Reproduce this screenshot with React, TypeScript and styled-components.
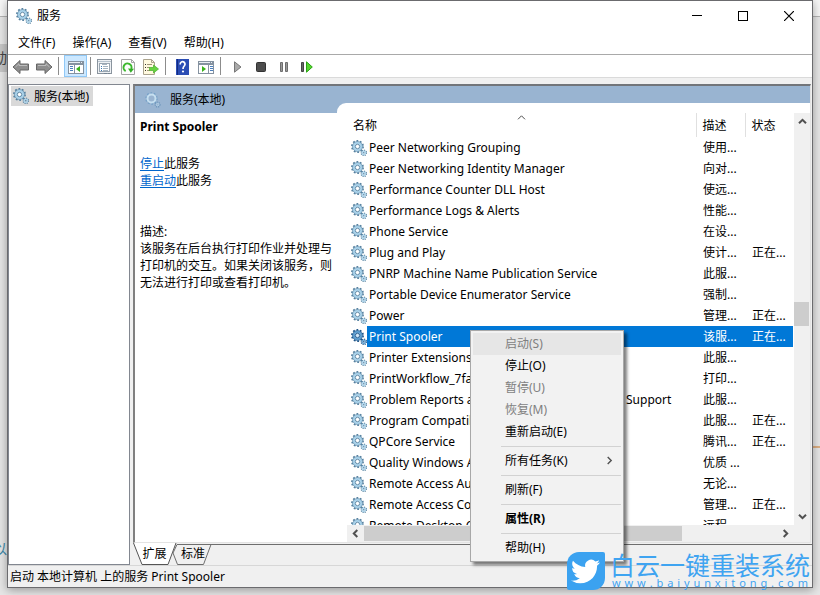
import React from "react";
import styled, { createGlobalStyle, css } from "styled-components";

const GlobalStyle = createGlobalStyle`
  *, *::before, *::after { box-sizing: border-box; }
  body {
    margin: 0;
    background: #e6e6e6;
    color: #000;
    font: 12px/17px "Noto Sans", "Noto Sans CJK SC", sans-serif;
  }
  button { margin: 0; padding: 0; border: 0; background: none; color: inherit; font: inherit; }
`;

const Desktop = styled.div`
  position: relative;
  display: flex;
  height: 100vh;
  padding: 0 7px 7px;
  overflow: hidden;
  background: linear-gradient(#f6f6f6 0 16px, #b4b4b4 16px 17px, #e6e6e6 17px);
`;

const BehindText = styled.span<{ $top: number; $tone: string; $fill: string }>`
  position: absolute;
  left: 0;
  top: ${(p) => p.$top}px;
  width: 7px;
  height: 28px;
  overflow: hidden;
  direction: rtl;
  white-space: nowrap;
  line-height: 28px;
  font-size: 14px;
  color: ${(p) => p.$tone};
  background: ${(p) => p.$fill};
`;

const BehindRule = styled.span`
  position: absolute;
  right: 0;
  top: 446px;
  width: 7px;
  height: 2px;
  background: #dcae82;
`;

const Window = styled.main`
  position: relative;
  display: flex;
  flex: 1;
  min-width: 0;
  flex-direction: column;
  border: 1px solid #6b6b6e;
  background: #f0f0f0;
  box-shadow: 0 2px 9px rgba(0, 0, 0, 0.35);
`;

const TitleBar = styled.header`
  display: flex;
  flex: none;
  align-items: center;
  height: 29px;
  padding-left: 8px;
  background: #fff;
`;

const Title = styled.h1`
  flex: 1;
  margin: 0 0 0 5px;
  font-size: 12px;
  font-weight: 400;
`;

const CaptionButton = styled.button`
  display: grid;
  place-items: center;
  width: 46px;
  height: 29px;
`;

const MenuBar = styled.nav`
  display: flex;
  flex: none;
  align-items: center;
  gap: 17px;
  height: 25px;
  padding-left: 10px;
  border-bottom: 1px solid #a9a9a9;
  background: #fff;
`;

const Toolbar = styled.div`
  display: flex;
  flex: none;
  align-items: center;
  height: 23px;
  padding-left: 1px;
  border-bottom: 1px solid #dadada;
  background: #fff;
`;

const ToolButton = styled.button<{ $pressed?: boolean }>`
  display: grid;
  place-items: center;
  width: 23px;
  height: 22px;
  padding-top: 2px;
  ${(p) => p.$pressed && css`
    border: 1px solid #90c8f6;
    background: #cce8ff;
  `}
`;

const ToolDivider = styled.span<{ $tight?: boolean }>`
  width: 1px;
  height: 18px;
  margin: 0 ${(p) => (p.$tight ? 2 : 5)}px 0 3px;
  background: #8c8c8c;
`;

const Body = styled.div`
  display: flex;
  flex: 1;
  gap: 3px;
  min-height: 0;
  padding-top: 6px;
`;

const TreePane = styled.aside`
  flex: none;
  width: 122px;
  padding: 1px 2px;
  border: 1px solid #828790;
  background: #fff;
`;

const TreeItem = styled.button`
  display: flex;
  align-items: center;
  gap: 5px;
  height: 20px;
  padding: 0 4px 0 2px;
  background: #d9d9d9;
`;

const Workspace = styled.section`
  display: flex;
  flex: 1;
  min-width: 0;
  flex-direction: column;
`;

const Pane = styled.div`
  display: flex;
  flex: 1;
  min-height: 0;
  margin-right: 1px;
  border: solid;
  border-width: 2px 1px 1px 2px;
  border-color: #72757a #e3e3e3 #e3e3e3 #808080;
  background: #99b4d1;
`;

const Details = styled.div`
  display: flex;
  flex: none;
  flex-direction: column;
  width: 202px;
`;

const PaneTitle = styled.h2`
  display: flex;
  flex: none;
  align-items: center;
  gap: 9px;
  height: 27px;
  margin: 0;
  padding-left: 10px;
  font-size: 12px;
  font-weight: 400;
`;

const DetailText = styled.div`
  flex: 1;
  padding: 5px 4px 0 5px;
  background: #fff;
`;

const ServiceName = styled.h3`
  margin: 0 0 20px;
  font-size: 12px;
  font-weight: 700;
`;

const Paragraph = styled.p`
  margin: 0;
`;

const Actions = styled.div`
  margin-bottom: 34px;
`;

const ActionLink = styled.a`
  color: #0066cc;
  text-underline-offset: 2px;
`;

const ListPanel = styled.div`
  display: grid;
  flex: 1;
  grid-template-columns: minmax(0, 1fr) 16px;
  grid-template-rows: minmax(0, 1fr) 17px;
  min-width: 0;
  margin-top: 17px;
  padding: 10px 0 0 10px;
  border-top-left-radius: 9px;
  background: #fff;
`;

const TableView = styled.div`
  min-width: 0;
  margin-right: 1px;
  overflow: hidden;
`;

const Table = styled.table`
  width: 100%;
  table-layout: fixed;
  border-collapse: collapse;
`;

const HeadCell = styled.th<{ $width?: number }>`
  position: relative;
  width: ${(p) => (p.$width ? `${p.$width}px` : "auto")};
  height: 24px;
  padding: 0 0 0 6px;
  border-left: ${(p) => (p.$width ? "1px solid #e0e0e0" : "0")};
  font-weight: 400;
  text-align: left;
`;

const SortMark = styled.span`
  position: absolute;
  top: 0;
  left: 50%;
  display: flex;
  margin-left: -4px;
`;

const Row = styled.tr<{ $selected?: boolean }>`
  height: 21px;
  ${(p) => p.$selected && css`
    color: #fff;
    td + td, span { background: #0078d7; }
  `}
`;

const Cell = styled.td`
  height: 21px;
  padding: 0 0 0 7px;
  white-space: nowrap;
`;

const NameCell = styled.td`
  padding: 0 0 0 4px;
  white-space: nowrap;
`;

const NameBox = styled.div`
  display: flex;
  align-items: center;
  height: 21px;
`;

const NameLabel = styled.span`
  flex: 1;
  padding-left: 2px;
  line-height: 21px;
`;

const VScroll = styled.div`
  display: flex;
  flex-direction: column;
  align-items: center;
  justify-content: space-between;
  background: #f0f0f0;
`;

const HScroll = styled.div`
  display: flex;
  align-items: center;
  justify-content: space-between;
  background: #f0f0f0;
`;

const ScrollButton = styled.button`
  display: grid;
  flex: none;
  place-items: center;
  width: 17px;
  height: 17px;
`;

const VTrack = styled.div`
  flex: 1;
  width: 100%;
  padding-right: 1px;
  display: flex;
  flex-direction: column;
`;

const HTrack = styled.div`
  display: flex;
  flex: 1;
  height: 15px;
`;

const Thumb = styled.div`
  flex: none;
  background: #cdcdcd;
`;

const VThumb = styled(Thumb)`
  height: 24px;
`;

const HThumb = styled(Thumb)`
  width: 77%;
`;

const TrackSpace = styled.div<{ $grow: number }>`
  flex: ${(p) => p.$grow};
`;

const Corner = styled.div`
  background: #f0f0f0;
`;

const Tabs = styled.div`
  display: flex;
  flex: none;
  height: 22px;
`;

const TabRule = styled.div`
  flex: 1;
  margin-top: 1px;
  border-top: 1px solid #6e6e6e;
`;

const Tab = styled.button`
  position: relative;
  width: 34px;
  height: 22px;
`;

const FirstTab = styled(Tab)`
  width: 43px;
`;

const TabShape = styled.svg`
  position: absolute;
  top: 0;
  left: 0;
  overflow: visible;
`;

const TabLabel = styled.span`
  position: relative;
  line-height: 22px;
`;

const StatusBar = styled.footer`
  flex: none;
  height: 22px;
  padding-left: 2px;
  border-top: 1px solid #d7d7d7;
  line-height: 22px;
`;

const ContextMenu = styled.div`
  position: absolute;
  left: 462px;
  top: 329px;
  width: 154px;
  padding: 2px;
  border: 1px solid #a8a8a8;
  background: #f2f2f2;
  box-shadow: 3px 3px 3px rgba(0, 0, 0, 0.5);
`;

const MenuEntry = styled.button<{ $disabled?: boolean; $active?: boolean; $bold?: boolean }>`
  display: flex;
  align-items: center;
  justify-content: space-between;
  width: 100%;
  height: 22px;
  padding: 0 7px 2px 32px;
  color: ${(p) => (p.$disabled ? "#7f7f7f" : "#000")};
  background: ${(p) => (p.$active ? "#e6e6e6" : "transparent")};
  font-weight: ${(p) => (p.$bold ? 700 : 400)};
`;

const MenuRule = styled.hr`
  height: 1px;
  margin: 3px 0 3px 28px;
  border: 0;
  background: #d2d2d2;
`;

const Brand = styled.div`
  position: absolute;
  right: 10px;
  bottom: 5px;
  display: flex;
  gap: 5px;
  color: #3fa4f1;
`;

const BrandBadge = styled.div`
  display: grid;
  place-items: center;
  width: 38px;
  height: 38px;
  border-radius: 12px 2px 12px 2px;
  background: #3ba2f0;
`;

const BrandText = styled.div`
  display: flex;
  flex-direction: column;
`;

const BrandName = styled.strong`
  font: 400 25px/24px "Noto Sans CJK SC", sans-serif;
  white-space: nowrap;
`;

const BrandUrl = styled.span`
  display: flex;
  justify-content: space-between;
  padding: 0 2px;
  font: 11px/14px "Noto Sans", sans-serif;
`;

function Gear({ selected = false }: { selected?: boolean }) {
  const edge = selected ? "#1d5488" : "#55809f";
  const fill = selected ? "#5f9fd0" : "#a9d2ea";
  return (
    <svg width="16" height="16" viewBox="0 0 16 16" fill="none" aria-hidden="true">
      <circle cx="6.5" cy="6.5" r="5.6" stroke={edge} strokeWidth="1.7" strokeDasharray="1.8 1.72" />
      <circle cx="6.5" cy="6.5" r="3.7" stroke={fill} strokeWidth="2.6" />
      <circle cx="6.5" cy="6.5" r="5" stroke={edge} strokeWidth=".6" />
      <circle cx="6.5" cy="6.5" r="2.2" fill={selected ? "#d3e8f7" : "#fff"} stroke={edge} strokeWidth=".9" />
      <circle cx="12.8" cy="12.8" r="2.6" stroke={edge} strokeWidth="1.3" strokeDasharray="1.1 .94" />
      <circle cx="12.8" cy="12.8" r="1.7" stroke={fill} strokeWidth="1.3" />
      <circle cx="12.8" cy="12.8" r=".8" fill={edge} />
    </svg>
  );
}

function PaleGear() {
  return (
    <svg width="16" height="16" viewBox="0 0 16 16" fill="none" aria-hidden="true">
      <circle cx="6.5" cy="6.5" r="5.4" stroke="#739fc6" strokeWidth="1.6" strokeDasharray="1.7 1.69" />
      <circle cx="6.5" cy="6.5" r="4" stroke="#c5dff0" strokeWidth="2" />
      <circle cx="12.6" cy="12.6" r="2.3" stroke="#6f97bd" strokeWidth="1.5" strokeDasharray="1.1 .7" />
      <circle cx="12.6" cy="12.6" r="1.3" stroke="#b3d0e5" />
    </svg>
  );
}

type Direction = "up" | "down" | "left" | "right";
const turns: Record<Direction, number> = { up: 0, right: 90, down: 180, left: 270 };

function Chevron({ to, width = 2 }: { to: Direction; width?: number }) {
  return (
    <svg width="9" height="9" viewBox="0 0 9 9" fill="none" aria-hidden="true">
      <path d="M1 6.3 4.5 2.8 8 6.3" stroke="#505050" strokeWidth={width} transform={`rotate(${turns[to]} 4.5 4.5)`} />
    </svg>
  );
}

function Arrow({ flip = false }: { flip?: boolean }) {
  return (
    <svg width="18" height="16" viewBox="0 0 18 16" aria-hidden="true">
      <path d="M1 8 8 1.5V5h8.5v6H8v3.5Z" fill="#8e8e8e" stroke="#666" transform={flip ? "rotate(180 9 8)" : undefined} />
      <path d="M3.5 8 7 4.7V6.5h8" fill="none" stroke="#bdbdbd" transform={flip ? "matrix(-1 0 0 1 18 0)" : undefined} />
    </svg>
  );
}

function PanelIcon({ side }: { side: "left" | "right" }) {
  const list = side === "left" ? 2 : 12;
  return (
    <svg width="16" height="13" viewBox="0 0 16 13" shapeRendering="crispEdges" aria-hidden="true">
      <path d="M0 0h16v13H0z" fill="#8592a0" />
      <path d="M1 1h11v1H1zM13 1h1v1h-1z" fill="#e9eef3" />
      <path d="M1 4h14v8H1z" fill="#fff" />
      <path d={side === "left" ? "M6 4h1v8H6z" : "M10 4h1v8h-1z"} fill="#8592a0" />
      <path d={`M${list} 5h3v1h-3zM${list} 7h3v1h-3zM${list} 9h3v1h-3z`} fill="#4c7fbd" />
      <path d={side === "left" ? "M12 5v6L8 8z" : "M4 5v6l4-3z"} fill="#39b31b" shapeRendering="auto" />
    </svg>
  );
}

function PropertiesIcon() {
  return (
    <svg width="15" height="16" viewBox="0 0 15 16" shapeRendering="crispEdges" aria-hidden="true">
      <path d="M.5.5h14v14H.5z" fill="#eef1f4" stroke="#8a949e" />
      <path d="M1 2h13" stroke="#b8c3cd" />
      <path d="M2.5 4.5h10v8h-10z" fill="#fff" stroke="#9aa6b1" />
      <path d="M4 7h1M4 9h1M4 11h1" stroke="#3977b4" />
      <path d="M6 7h5M6 9h5M6 11h5M5 5h5" stroke="#a6b4c0" />
      <path d="M7 14h3M11 14h2" stroke="#748391" />
    </svg>
  );
}

function RefreshIcon() {
  return (
    <svg width="14" height="16" viewBox="0 0 14 16" fill="none" aria-hidden="true">
      <path d="M.5.5h10l3 3v12H.5z" fill="#fdfdfd" stroke="#a5a5a5" />
      <path d="M10.5.5v3h3" stroke="#a5a5a5" />
      <path d="M4.7 12A4 4 0 1 1 10.2 10" stroke="#3db82e" strokeWidth="2" />
      <path d="m7 9.5 6 .2-3.2 4Z" fill="#32ad25" />
    </svg>
  );
}

function ExportIcon() {
  return (
    <svg width="16" height="16" viewBox="0 0 16 16" fill="none" aria-hidden="true">
      <path d="M.5.5h8l3 3v12H.5z" fill="#fff9df" stroke="#aaa38d" />
      <path d="M8.5.5v3h3" stroke="#aaa38d" />
      <path d="M2 5.5h1M2 8.5h1M2 11.5h1" stroke="#333" />
      <path d="M4 5.5h5M4 8.5h3M4 11.5h3" stroke="#9c9374" />
      <path d="M6.5 8.5h4V6l5 4-5 4v-2.5h-4z" fill="#67d440" stroke="#48ad2a" strokeWidth=".7" />
    </svg>
  );
}

function HelpIcon() {
  return (
    <svg width="13" height="16" viewBox="0 0 13 16" fill="none" aria-hidden="true">
      <path d="M0 0h13v16H0z" fill="#2b4db4" />
      <path d="M1.5 0v16" stroke="#142c82" />
      <path d="M4.2 5.5V5A2.4 2.4 0 1 1 8.5 6.6C7.5 7.6 7 8 7 10" stroke="#fff" strokeWidth="1.7" />
      <circle cx="7" cy="12.5" r="1.1" fill="#fff" />
    </svg>
  );
}

function PlayIcon() {
  return (
    <svg width="8" height="12" viewBox="0 0 8 12" aria-hidden="true">
      <path d="M.5.8 7 6 .5 11.2Z" fill="#aaa" stroke="#777" />
    </svg>
  );
}

function StopIcon() {
  return (
    <svg width="10" height="10" viewBox="0 0 10 10" aria-hidden="true">
      <rect x=".5" y=".5" width="9" height="9" rx="1" fill="#4d4d4d" stroke="#333" />
    </svg>
  );
}

function PauseIcon() {
  return (
    <svg width="8" height="10" viewBox="0 0 8 10" aria-hidden="true">
      <path d="M.5.5h2v9h-2zM5.5.5h2v9h-2z" fill="#999" stroke="#6e6e6e" />
    </svg>
  );
}

function RestartIcon() {
  return (
    <svg width="12" height="12" viewBox="0 0 12 12" aria-hidden="true">
      <path d="M.5 1.5h2v9h-2z" fill="#666" stroke="#444" />
      <path d="M5.5.8 11.3 6 5.5 11.2Z" fill="#55d62e" stroke="#2aa414" />
    </svg>
  );
}

function Bird() {
  return (
    <svg width="29" height="29" viewBox="0 0 24 24" fill="#fff" aria-hidden="true">
      <path d="M23.953 4.57a10 10 0 01-2.825.775 4.958 4.958 0 002.163-2.723c-.951.555-2.005.959-3.127 1.184a4.92 4.92 0 00-8.384 4.482C7.69 8.095 4.067 6.13 1.64 3.162a4.822 4.822 0 00-.666 2.475c0 1.71.87 3.213 2.188 4.096a4.904 4.904 0 01-2.228-.616v.06a4.923 4.923 0 003.946 4.827 4.996 4.996 0 01-2.212.085 4.936 4.936 0 004.604 3.417 9.867 9.867 0 01-6.102 2.105c-.39 0-.779-.023-1.17-.067a13.995 13.995 0 007.557 2.209c9.053 0 13.998-7.496 13.998-13.985 0-.21 0-.42-.015-.63A9.935 9.935 0 0024 4.59z" />
    </svg>
  );
}

interface Service {
  name: string;
  description: string;
  running?: boolean;
}

const services: Service[] = [
  { name: "Peer Networking Grouping", description: "使用..." },
  { name: "Peer Networking Identity Manager", description: "向对..." },
  { name: "Performance Counter DLL Host", description: "使远..." },
  { name: "Performance Logs & Alerts", description: "性能..." },
  { name: "Phone Service", description: "在设..." },
  { name: "Plug and Play", description: "使计...", running: true },
  { name: "PNRP Machine Name Publication Service", description: "此服..." },
  { name: "Portable Device Enumerator Service", description: "强制..." },
  { name: "Power", description: "管理...", running: true },
  { name: "Print Spooler", description: "该服...", running: true },
  { name: "Printer Extensions and Notifications", description: "此服..." },
  { name: "PrintWorkflow_7fa", description: "打印..." },
  { name: "Problem Reports and Solutions Control Panel Support", description: "此服..." },
  { name: "Program Compatibility Assistant", description: "此服...", running: true },
  { name: "QPCore Service", description: "腾讯...", running: true },
  { name: "Quality Windows Audio Video", description: "优质 ..." },
  { name: "Remote Access Auto Connect", description: "无论..." },
  { name: "Remote Access Connection", description: "管理...", running: true },
  { name: "Remote Desktop Config", description: "远程..." },
];

const menus = ["文件(F)", "操作(A)", "查看(V)", "帮助(H)"];

export default function App() {
  return (
    <Desktop>
      <GlobalStyle />
      <BehindText $top={44} $tone="#444" $fill="#c6c6c6">动</BehindText>
      <BehindText $top={535} $tone="#3a86a8" $fill="transparent">以</BehindText>
      <BehindRule />
      <Window>
        <TitleBar>
          <Gear />
          <Title>服务</Title>
          <CaptionButton aria-label="最小化">
            <svg width="10" height="11" shapeRendering="crispEdges"><path d="M0 5.5h10" stroke="#000" /></svg>
          </CaptionButton>
          <CaptionButton aria-label="最大化">
            <svg width="10" height="10" shapeRendering="crispEdges"><path d="M.5.5h9v9h-9z" fill="none" stroke="#000" /></svg>
          </CaptionButton>
          <CaptionButton aria-label="关闭">
            <svg width="10" height="10"><path d="m0 0 10 10M10 0 0 10" stroke="#000" strokeWidth="1.2" /></svg>
          </CaptionButton>
        </TitleBar>
        <MenuBar>
          {menus.map((label) => <button key={label}>{label}</button>)}
        </MenuBar>
        <Toolbar>
          <ToolButton aria-label="后退"><Arrow /></ToolButton>
          <ToolButton aria-label="前进"><Arrow flip /></ToolButton>
          <ToolDivider />
          <ToolButton aria-label="显示控制台树" $pressed><PanelIcon side="left" /></ToolButton>
          <ToolDivider $tight />
          <ToolButton aria-label="属性"><PropertiesIcon /></ToolButton>
          <ToolButton aria-label="刷新"><RefreshIcon /></ToolButton>
          <ToolButton aria-label="导出列表"><ExportIcon /></ToolButton>
          <ToolDivider />
          <ToolButton aria-label="帮助"><HelpIcon /></ToolButton>
          <ToolButton aria-label="显示操作窗格"><PanelIcon side="right" /></ToolButton>
          <ToolDivider />
          <ToolButton aria-label="启动服务"><PlayIcon /></ToolButton>
          <ToolButton aria-label="停止服务"><StopIcon /></ToolButton>
          <ToolButton aria-label="暂停服务"><PauseIcon /></ToolButton>
          <ToolButton aria-label="重启动服务"><RestartIcon /></ToolButton>
        </Toolbar>
        <Body>
          <TreePane>
            <TreeItem><Gear />服务(本地)</TreeItem>
          </TreePane>
          <Workspace>
            <Pane>
              <Details>
                <PaneTitle><PaleGear />服务(本地)</PaneTitle>
                <DetailText>
                  <ServiceName>Print Spooler</ServiceName>
                  <Actions>
                    <Paragraph><ActionLink href="#stop">停止</ActionLink>此服务</Paragraph>
                    <Paragraph><ActionLink href="#restart">重启动</ActionLink>此服务</Paragraph>
                  </Actions>
                  <Paragraph>描述:</Paragraph>
                  <Paragraph>该服务在后台执行打印作业并处理与打印机的交互。如果关闭该服务，则无法进行打印或查看打印机。</Paragraph>
                </DetailText>
              </Details>
              <ListPanel>
                <TableView>
                  <Table>
                    <thead>
                      <tr>
                        <HeadCell>名称<SortMark><Chevron to="up" width={1} /></SortMark></HeadCell>
                        <HeadCell $width={49}>描述</HeadCell>
                        <HeadCell $width={48}>状态</HeadCell>
                      </tr>
                    </thead>
                    <tbody>
                      {services.map((service) => {
                        const selected = service.name === "Print Spooler";
                        return (
                          <Row key={service.name} $selected={selected}>
                            <NameCell>
                              <NameBox><Gear selected={selected} /><NameLabel>{service.name}</NameLabel></NameBox>
                            </NameCell>
                            <Cell>{service.description}</Cell>
                            <Cell>{service.running ? "正在..." : ""}</Cell>
                          </Row>
                        );
                      })}
                    </tbody>
                  </Table>
                </TableView>
                <VScroll>
                  <ScrollButton aria-label="向上滚动"><Chevron to="up" /></ScrollButton>
                  <VTrack>
                    <TrackSpace $grow={172} />
                    <VThumb />
                    <TrackSpace $grow={183} />
                  </VTrack>
                  <ScrollButton aria-label="向下滚动"><Chevron to="down" /></ScrollButton>
                </VScroll>
                <HScroll>
                  <ScrollButton aria-label="向左滚动"><Chevron to="left" /></ScrollButton>
                  <HTrack><HThumb /></HTrack>
                  <ScrollButton aria-label="向右滚动"><Chevron to="right" /></ScrollButton>
                </HScroll>
                <Corner />
              </ListPanel>
            </Pane>
            <Tabs>
              <FirstTab>
                <TabShape width="43" height="22" aria-hidden="true">
                  <path d="M.5 0 9 21.5h26L43 0" fill="#fff" stroke="#555" />
                </TabShape>
                <TabLabel>扩展</TabLabel>
              </FirstTab>
              <Tab>
                <TabShape width="34" height="22" aria-hidden="true">
                  <path d="M1 1.5h34L27.5 21.5h-26L-3 10Z" fill="#f0f0f0" stroke="#6e6e6e" />
                </TabShape>
                <TabLabel>标准</TabLabel>
              </Tab>
              <TabRule />
            </Tabs>
          </Workspace>
        </Body>
        <StatusBar>启动 本地计算机 上的服务 Print Spooler</StatusBar>
        <ContextMenu role="menu">
          <MenuEntry role="menuitem" aria-disabled="true" $disabled $active>启动(S)</MenuEntry>
          <MenuEntry role="menuitem">停止(O)</MenuEntry>
          <MenuEntry role="menuitem" aria-disabled="true" $disabled>暂停(U)</MenuEntry>
          <MenuEntry role="menuitem" aria-disabled="true" $disabled>恢复(M)</MenuEntry>
          <MenuEntry role="menuitem">重新启动(E)</MenuEntry>
          <MenuRule />
          <MenuEntry role="menuitem">所有任务(K)<Chevron to="right" width={1.4} /></MenuEntry>
          <MenuRule />
          <MenuEntry role="menuitem">刷新(F)</MenuEntry>
          <MenuRule />
          <MenuEntry role="menuitem" $bold>属性(R)</MenuEntry>
          <MenuRule />
          <MenuEntry role="menuitem">帮助(H)</MenuEntry>
        </ContextMenu>
      </Window>
      <Brand>
        <BrandBadge><Bird /></BrandBadge>
        <BrandText>
          <BrandName>白云一键重装系统</BrandName>
          <BrandUrl aria-label="www.baiyunxitong.com">
            {Array.from("www.baiyunxitong.com").map((letter, i) => <span key={i}>{letter}</span>)}
          </BrandUrl>
        </BrandText>
      </Brand>
    </Desktop>
  );
}
